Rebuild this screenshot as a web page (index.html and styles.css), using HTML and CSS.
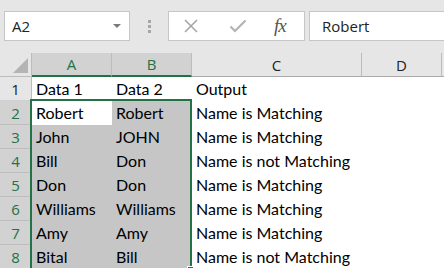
FILE: index.html
```html
<!DOCTYPE html>
<html lang="en">
  <head>
    <meta charset="UTF-8" />
    <title>Book1 - Excel</title>
    <link rel="stylesheet" href="styles.css">
  </head>
  <body>
    <div class="app">
      <div class="toolbar">
        <div class="namebox">
          <span>A2</span>
          <span class="caret"></span>
        </div>
        <div class="grip"><i></i><i></i><i></i></div>
        <div class="fbuttons">
          <svg class="icon" width="16" height="16" viewBox="0 0 16 16">
            <path d="M2 2 L14 14 M14 2 L2 14" stroke="#a6a6a6" stroke-width="1.6" fill="none" />
          </svg>
          <svg class="icon" width="18" height="16" viewBox="0 0 18 16">
            <path d="M1.5 8.5 L6 13 L16.5 2.5" stroke="#b3b3b3" stroke-width="2.2" fill="none" />
          </svg>
          <span class="fx">fx</span>
        </div>
        <div class="formula">Robert</div>
      </div>

      <div class="sheet">
        <div class="corner"><span class="tri"></span></div>
        <div class="colhead sel">A</div>
        <div class="colhead sel">B</div>
        <div class="colhead">C</div>
        <div class="colhead">D</div>
        <div class="colhead rest"></div>

        <div class="rowhead">1</div>
        <div class="cell">Data 1</div>
        <div class="cell">Data 2</div>
        <div class="cell">Output</div>
        <div class="cell"></div>
        <div class="cell"></div>

        <div class="rowhead sel">2</div>
        <div class="cell active">Robert</div>
        <div class="cell fill">Robert</div>
        <div class="cell">Name is Matching</div>
        <div class="cell"></div>
        <div class="cell"></div>

        <div class="rowhead sel">3</div>
        <div class="cell fill">John</div>
        <div class="cell fill">JOHN</div>
        <div class="cell">Name is Matching</div>
        <div class="cell"></div>
        <div class="cell"></div>

        <div class="rowhead sel">4</div>
        <div class="cell fill">Bill</div>
        <div class="cell fill">Don</div>
        <div class="cell">Name is not Matching</div>
        <div class="cell"></div>
        <div class="cell"></div>

        <div class="rowhead sel">5</div>
        <div class="cell fill">Don</div>
        <div class="cell fill">Don</div>
        <div class="cell">Name is Matching</div>
        <div class="cell"></div>
        <div class="cell"></div>

        <div class="rowhead sel">6</div>
        <div class="cell fill">Williams</div>
        <div class="cell fill">Williams</div>
        <div class="cell">Name is Matching</div>
        <div class="cell"></div>
        <div class="cell"></div>

        <div class="rowhead sel">7</div>
        <div class="cell fill">Amy</div>
        <div class="cell fill">Amy</div>
        <div class="cell">Name is Matching</div>
        <div class="cell"></div>
        <div class="cell"></div>

        <div class="rowhead sel">8</div>
        <div class="cell fill">Bital</div>
        <div class="cell fill">Bill</div>
        <div class="cell">Name is not Matching</div>
        <div class="cell"></div>
        <div class="cell"></div>

        <!-- selection outline A2:B8 -->
        <div class="selection"><span class="handle"></span></div>
      </div>
    </div>
  </body>
</html>
```

FILE: styles.css
```css
body {
  margin: 0;
  background-color: white;
  font-family: "Open Sans", "Noto Sans", sans-serif;
  overflow: hidden;
}

.app {
  width: 444px;
  height: 268px;
  overflow: hidden;
}

/* formula bar */
.toolbar {
  height: 53px;
  background-color: #e6e6e6;
  display: flex;
  align-items: flex-start;
  padding-top: 11px;
  box-sizing: border-box;
}

.namebox {
  margin-left: 4px;
  width: 126px;
  height: 30px;
  box-sizing: border-box;
  background-color: white;
  border: 1px solid #c6c6c6;
  display: flex;
  align-items: center;
  justify-content: space-between;
  padding: 0 8px 0 7px;
  font-size: 15px;
  color: #222;
}

.caret {
  width: 0;
  height: 0;
  border-left: 4px solid transparent;
  border-right: 4px solid transparent;
  border-top: 4px solid #7a7a7a;
}

.grip {
  width: 38px;
  height: 30px;
  display: flex;
  flex-direction: column;
  align-items: center;
  justify-content: center;
  gap: 2px;
}

.grip i {
  width: 3px;
  height: 3px;
  background-color: #a6a6a6;
}

.fbuttons {
  width: 137px;
  height: 30px;
  box-sizing: border-box;
  background-color: white;
  border: 1px solid #c6c6c6;
  display: flex;
  align-items: center;
  padding-left: 14px;
}

.fbuttons .icon + .icon {
  margin-left: 30px;
}

.fx {
  margin-left: 27px;
  font-family: "Liberation Serif", serif;
  font-style: italic;
  font-size: 19px;
  color: #555;
  letter-spacing: -1px;
}

.formula {
  margin-left: 4px;
  flex: 1;
  height: 30px;
  box-sizing: border-box;
  background-color: white;
  border: 1px solid #c6c6c6;
  border-right: none;
  padding-left: 12px;
  display: flex;
  align-items: center;
  font-size: 15px;
  color: #222;
}

/* grid */
.sheet {
  position: relative;
  display: grid;
  grid-template-columns: 32px 80px 80px 170px 80px 2px;
  grid-template-rows: 24px repeat(8, 24px);
  font-family: "Lato", sans-serif;
  font-size: 16px;
  color: #000;
}

.corner {
  background-color: #e6e6e6;
  border-right: 1px solid #bcbcbc;
  border-bottom: 1px solid #bcbcbc;
  box-sizing: border-box;
  position: relative;
}

.tri {
  position: absolute;
  right: 3px;
  bottom: 3px;
  width: 0;
  height: 0;
  border-left: 15px solid transparent;
  border-bottom: 15px solid #b4b4b4;
}

.colhead {
  background-color: #e6e6e6;
  border-right: 1px solid #bcbcbc;
  border-bottom: 1px solid #ababab;
  box-sizing: border-box;
  display: flex;
  align-items: center;
  justify-content: center;
  font-family: "Open Sans", sans-serif;
  font-size: 15px;
  color: #222;
}

.colhead.sel {
  background-color: #d2d2d2;
  color: #217346;
  border-bottom: 2px solid #217346;
}

.colhead.rest {
  border-right: none;
}

.rowhead {
  background-color: #e6e6e6;
  border-right: 1px solid #bcbcbc;
  border-bottom: 1px solid #d0d0d0;
  box-sizing: border-box;
  display: flex;
  align-items: center;
  justify-content: center;
  font-family: "Open Sans", sans-serif;
  font-size: 15px;
  color: #222;
}

.rowhead.sel {
  background-color: #d2d2d2;
  color: #217346;
  border-bottom-color: #bdbdbd;
}

.cell {
  display: flex;
  align-items: center;
  padding: 0 0 2px 4px;
  white-space: nowrap;
  overflow: hidden;
}

.cell.fill {
  background-color: #c6c6c6;
}

.cell.active {
  background-color: white;
}

.selection {
  position: absolute;
  left: 30px;
  top: 46px;
  width: 162px;
  height: 172px;
  box-sizing: border-box;
  border: 2px solid #217346;
}

.handle {
  position: absolute;
  right: -4px;
  bottom: -4px;
  width: 5px;
  height: 5px;
  background-color: #217346;
  border: 1px solid white;
}
```
